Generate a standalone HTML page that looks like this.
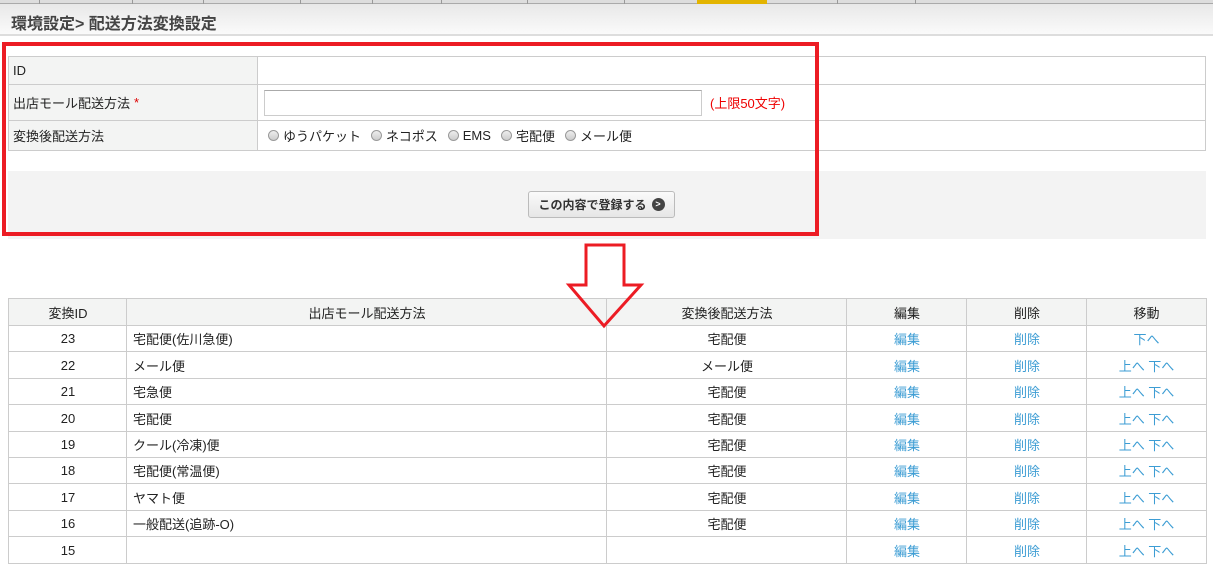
<!DOCTYPE html>
<html><head><meta charset="utf-8"><style>
*{margin:0;padding:0;box-sizing:border-box}
body{width:1213px;height:539px;overflow:hidden;background:#fff;font-family:"Liberation Sans","Noto Sans CJK JP",sans-serif;font-size:13px;color:#222;position:relative}
.a{position:absolute}
.tabs{left:0;top:0;width:1213px;height:4px;background:#ddd;border-bottom:1px solid #aaa}
.sep{top:0;width:1px;height:4px;background:#999}
.hdr{left:0;top:4px;width:1213px;height:32px;background:linear-gradient(#e8e8e8,#fafafa);border-bottom:2px solid #ddd}
.hdr span{position:absolute;left:11px;top:6px;font-size:16px;font-weight:bold;color:#444}
.cell{position:absolute;border:1px solid #ccc;display:flex;align-items:center}
.lab{background:#f3f4f3;padding-left:4px;font-size:13px}
.c{justify-content:center}
.l{padding-left:6px}
.lnk{color:#3d9dd4}
.radio{display:inline-block;width:11px;height:11px;border:1px solid #999;border-radius:50%;background:linear-gradient(#eee,#ccc);margin:0 4px 0 10px;vertical-align:-1px}
</style></head><body>
<div class="a tabs"></div>
<div class="a sep" style="left:39px"></div><div class="a sep" style="left:132px"></div><div class="a sep" style="left:203px"></div><div class="a sep" style="left:300px"></div><div class="a sep" style="left:372px"></div><div class="a sep" style="left:441px"></div><div class="a sep" style="left:527px"></div><div class="a sep" style="left:624px"></div>
<div class="a" style="left:697px;top:0;width:70px;height:4px;background:#e3b400"></div>
<div class="a sep" style="left:837px"></div><div class="a sep" style="left:915px"></div>
<div class="a hdr"><span>環境設定&gt; 配送方法変換設定</span></div>

<div class="cell lab" style="left:8px;top:56px;width:250px;height:29px">ID</div>
<div class="cell" style="left:257px;top:56px;width:949px;height:29px"></div>
<div class="cell lab" style="left:8px;top:84px;width:250px;height:37px">出店モール配送方法 <span style="color:#d00;margin-left:4px">*</span></div>
<div class="cell" style="left:257px;top:84px;width:949px;height:37px">
 <div style="margin-left:6px;width:438px;height:26px;border:1px solid #ccc;border-top-color:#aaa"></div>
 <span style="color:#e00;margin-left:8px">(上限50文字)</span></div>
<div class="cell lab" style="left:8px;top:120px;width:250px;height:31px">変換後配送方法</div>
<div class="cell" style="left:257px;top:120px;width:949px;height:31px;font-size:13px">
<span class="radio"></span>ゆうパケット<span class="radio"></span>ネコポス<span class="radio"></span>EMS<span class="radio"></span>宅配便<span class="radio"></span>メール便</div>

<div class="a" style="left:8px;top:171px;width:1198px;height:68px;background:#f3f3f3"></div>
<div class="a" style="left:528px;top:191px;width:147px;height:27px;border:1px solid #bbb;border-radius:3px;background:linear-gradient(#fafafa,#e6e6e6);font-size:12px;font-weight:bold;color:#333;display:flex;align-items:center;justify-content:center">この内容で登録する<span style="display:inline-block;width:13px;height:13px;border-radius:50%;background:#444;color:#fff;font-size:9px;line-height:13px;text-align:center;margin-left:5px">&gt;</span></div>

<div class="a" style="left:2px;top:42px;width:817px;height:194px;border:4px solid #ec1c24"></div>

<div id="t"></div>
<svg class="a" style="left:565px;top:243px;z-index:5" width="80" height="88"><path d="M21 2 H59 V42 H76 L39 83 L4 42 H21 Z" fill="none" stroke="#ec1c24" stroke-width="3"/></svg>
<script>
var cols=[[8,119],[126,481],[606,241],[846,121],[966,121],[1086,120]];
var hd=["変換ID","出店モール配送方法","変換後配送方法","編集","削除","移動"];
var rows=[["23","宅配便(佐川急便)","宅配便",1],["22","メール便","メール便",0],["21","宅急便","宅配便",0],["20","宅配便","宅配便",0],["19","クール(冷凍)便","宅配便",0],["18","宅配便(常温便)","宅配便",0],["17","ヤマト便","宅配便",0],["16","一般配送(追跡-O)","宅配便",0],["15","","",0]];
var s="";
function row(ty,hg,vals,bg,head){for(var i=0;i<6;i++){s+='<div class="cell '+(i==1&&!head?'l':'c')+'" style="left:'+cols[i][0]+'px;top:'+ty+'px;width:'+(cols[i][1]+1)+'px;height:'+(hg+1)+'px;background:'+bg+'">'+vals[i]+'</div>';}}
row(298,27,hd,"#f3f4f3",1);
for(var r=0;r<rows.length;r++){var x=rows[r];var ty=Math.round(325+r*26.4);var nt=Math.round(325+(r+1)*26.4);
row(ty,nt-ty,[x[0],x[1],x[2],x[0]?'<span class="lnk">編集</span>':'',x[0]?'<span class="lnk">削除</span>':'',x[0]?(x[3]?'<span class="lnk">下へ</span>':'<span class="lnk">上へ 下へ</span>'):''],"#fff",0);}
document.getElementById("t").innerHTML=s;
</script>
</body></html>
